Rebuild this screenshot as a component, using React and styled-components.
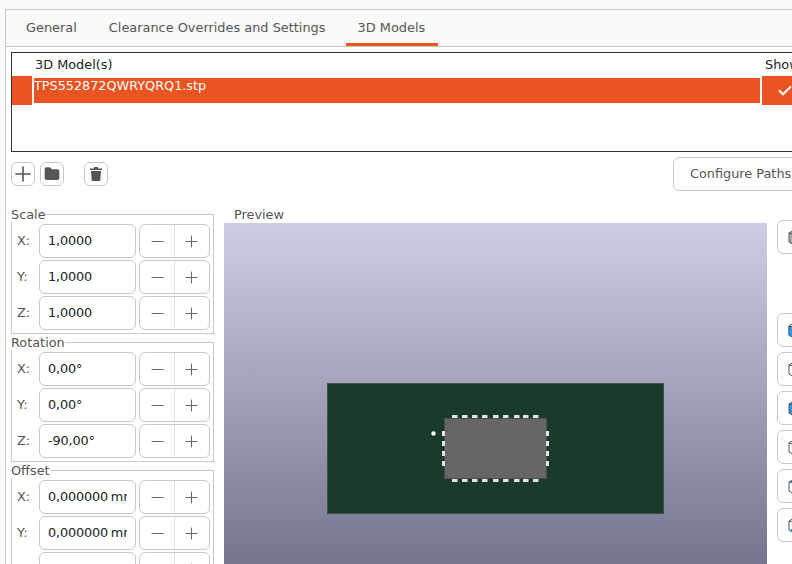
import React from 'react'
import styled, { createGlobalStyle } from 'styled-components'
import { Plus, Minus, Check, Folder } from 'lucide-react'

const Global = createGlobalStyle`
html, body { margin: 0; padding: 0; background: #fafafa; }
body { font-family: "DejaVu Sans", sans-serif; font-size: 12.85px; color: #2e3436; }
`

const Page = styled.div`
  width: 792px;
  height: 564px;
  overflow: hidden;
  padding: 9px 0 0 5px;
  box-sizing: border-box;
`
const Panel = styled.div`
  width: 900px;
  height: 600px;
  background: #fff;
  border-top: 1px solid #cdc7c2;
  border-left: 1px solid #cdc7c2;
  box-sizing: border-box;
`
const TabBar = styled.div`
  display: flex;
  height: 37px;
  box-sizing: border-box;
  padding-left: 8px;
  gap: 8px;
  background: #fafafa;
  border-bottom: 1px solid #cdc7c2;
  font-size: 12.9px;
`
const Tab = styled.div`
  padding: 0 ${p => (p.$active ? '13px' : '12px')} 0 12px;
  line-height: 35px;
  height: 36px;
  box-sizing: border-box;
  color: #555;
  border-bottom: 3px solid ${p => (p.$active ? '#e95420' : 'transparent')};
`
const Body = styled.div`
  padding: 5px 0 0 5px;
`
const Table = styled.div`
  width: 880px;
  height: 100px;
  box-sizing: border-box;
  border: 1px solid #333;
  background: #fff;
  color: #222;
`
const HeadRow = styled.div`
  display: grid;
  grid-template-columns: 23px 730px 1fr;
  height: 23px;
  line-height: 23px;
`
const DataRow = styled.div`
  display: grid;
  grid-template-columns: 20px 726px 1fr;
  column-gap: 2px;
  align-items: center;
  height: 29px;
`
const EndCell = styled.div`
  height: 29px;
  background: #e95420;
`
const NameCell = styled.div`
  height: 25px;
  background: #e95420;
  color: #fff;
  font-size: 12.8px;
  line-height: 16px;
`
const CheckCell = styled(EndCell)`
  display: flex;
  align-items: center;
  padding-left: 15px;
  color: #fff;
`
const Toolbar = styled.div`
  display: flex;
  align-items: center;
  height: 34px;
  margin-top: 5px;
  width: 880px;
`
const IconBtn = styled.div`
  width: 24px;
  height: 24px;
  box-sizing: border-box;
  border: 1px solid #cdc7c2;
  border-radius: 6px;
  background: #fff;
  color: #555;
  display: flex;
  align-items: center;
  justify-content: center;
  margin-left: ${p => p.$gap || 0}px;
  & > svg { flex: none; }
`
const PathsBtn = styled.div`
  margin-left: 565px;
  width: 130px;
  height: 34px;
  box-sizing: border-box;
  border: 1px solid #cdc7c2;
  border-radius: 6px;
  line-height: 32px;
  padding-left: 16px;
  color: #555;
  background: #fff;
  white-space: nowrap;
`
const Columns = styled.div`
  display: grid;
  grid-template-columns: 203px 543px 60px;
  column-gap: 10px;
  margin-top: 16px;
`
const Left = styled.div`
  display: flex;
  flex-direction: column;
  gap: 1px;
`
const Group = styled.fieldset`
  margin: 0;
  padding: 2px 3px 1px 0;
  border: 1px solid #cdc7c2;
  min-width: 0;
`
const Legend = styled.legend`
  padding: 0;
  margin: 0 0 0 -1px;
  line-height: 15px;
  color: #555;
`
const Field = styled.div`
  display: grid;
  grid-template-columns: 24px 97px 71px;
  column-gap: 3px;
  height: 34px;
  margin-bottom: 2px;
`
const Axis = styled.span`
  line-height: 34px;
  padding-left: 5px;
  color: #555;
`
const Input = styled.div`
  border: 1px solid #cdc7c2;
  border-radius: 6px;
  background: #fff;
  color: #222;
  line-height: 32px;
  padding: 0 8px;
  white-space: nowrap;
  box-sizing: border-box;
  height: 34px;
  letter-spacing: -0.17px;
  word-spacing: -1px;
  & > span { display: block; overflow: hidden; }
`
const Stepper = styled.div`
  display: grid;
  grid-template-columns: 34px 1fr;
  border: 1px solid #cdc7c2;
  border-radius: 6px;
  background: #fff;
  color: #666;
  box-sizing: border-box;
  height: 34px;
  & > div { display: flex; align-items: center; justify-content: center; }
  & > div + div { border-left: 1px solid #e6e3e0; padding-right: 2px; }
`
const PreviewLabel = styled.div`
  height: 16px;
  line-height: 15px;
  padding-left: 10px;
  color: #555;
`
const Viewer = styled.div`
  height: 400px;
  padding: 160px 0 0 103px;
  box-sizing: border-box;
  background: linear-gradient(180deg, #cdcde5 0, #75758f 341px);
  line-height: 0;
`
const Right = styled.div`
  display: flex;
  flex-direction: column;
  margin-top: 13px;
`
const ViewBtn = styled.div`
  width: 50px;
  height: 34px;
  box-sizing: border-box;
  border: 1px solid #cdc7c2;
  border-radius: 6px;
  background: #fff;
  flex: none;
  margin-bottom: 5px;
  padding: 8px 0 0 10px;
  line-height: 0;
  &:first-child { margin-bottom: 59px; }
`

// cube icon, face says which side is blue
function Cube({ face }) {
  const blue = '#2f97e0'
  const base = face === 'solid' ? '#a8a8a8' : '#fff'
  return (
    <svg width="18" height="18" viewBox="0 0 18 18">
      <path d="M1 4 L5 1.5 L13 1.5 L13 12 L5 15.5 L1 13 Z" fill={face === 'all' ? blue : base} stroke="#555" />
      {face === 'left' && <path d="M1 4 L5 5 L5 15.5 L1 13 Z" fill={blue} stroke="#1d6fa8" />}
      {face === 'top' && <path d="M1 4 L5 1.5 L13 1.5 L5 5 Z" fill={blue} />}
      {face === 'bottom' && <path d="M1 13 L5 15.5 L13 15.5 L5 12 Z" fill={blue} />}
      <path d="M1 4 L5 5 L5 15.5" fill="none" stroke="#555" />
    </svg>
  )
}

function TrashIcon() {
  return (
    <svg width="14" height="16" viewBox="0 0 14 16" fill="currentColor">
      <path d="M1 2.5 H5 V1 H9 V2.5 H13 V4 H1 Z" />
      <path d="M2 5 H12 L11.2 15 H2.8 Z" />
    </svg>
  )
}

// board and chip seen from above
function Board() {
  const top = [452, 462, 472, 482, 493, 503, 514, 523, 533]
  const side = [431, 441, 451, 461]
  return (
    <svg width="337" height="131" viewBox="327 383 337 131" style={{ display: 'block' }}>
      <rect x="327.5" y="383.5" width="336" height="130" fill="#1a3a2b" stroke="#3a5647" />
      <rect x="444.5" y="418.5" width="102" height="60" fill="#666" stroke="#4d4d4d" />
      {top.map(x => (
        <g key={x} fill="#e4e4e4">
          <rect x={x} y="415" width="5.5" height="3" />
          <rect x={x} y="479" width="5.5" height="3" />
        </g>
      ))}
      {side.map(y => (
        <g key={y} fill="#e4e4e4">
          <rect x="442" y={y} width="3" height="5" />
          <rect x="546" y={y} width="3" height="5" />
        </g>
      ))}
      <circle cx="433.5" cy="433.5" r="2.2" fill="#fff" />
    </svg>
  )
}

function Row({ axis, value }) {
  return (
    <Field>
      <Axis>{axis}:</Axis>
      <Input><span>{value}</span></Input>
      <Stepper>
        <div><Minus size={19} strokeWidth={1} absoluteStrokeWidth /></div>
        <div><Plus size={19} strokeWidth={1} absoluteStrokeWidth /></div>
      </Stepper>
    </Field>
  )
}

const groups = [
  { title: 'Scale', rows: [['X', '1,0000'], ['Y', '1,0000'], ['Z', '1,0000']] },
  { title: 'Rotation', rows: [['X', '0,00°'], ['Y', '0,00°'], ['Z', '-90,00°']] },
  { title: 'Offset', rows: [['X', '0,000000 mm'], ['Y', '0,000000 mm'], ['Z', '0,000000 mm']] },
]

export default function App() {
  return (
    <Page>
      <Global />
      <Panel>
        <TabBar>
          <Tab>General</Tab>
          <Tab>Clearance Overrides and Settings</Tab>
          <Tab $active>3D Models</Tab>
        </TabBar>
        <Body>
          <Table>
            <HeadRow>
              <span />
              <span>3D Model(s)</span>
              <span>Show</span>
            </HeadRow>
            <DataRow>
              <EndCell />
              <NameCell>TPS552872QWRYQRQ1.stp</NameCell>
              <CheckCell><Check size={16} strokeWidth={2.2} absoluteStrokeWidth /></CheckCell>
            </DataRow>
          </Table>
          <Toolbar>
            <IconBtn><Plus size={24} strokeWidth={1.6} absoluteStrokeWidth /></IconBtn>
            <IconBtn $gap={5}><Folder size={16} fill="currentColor" /></IconBtn>
            <IconBtn $gap={20}><TrashIcon /></IconBtn>
            <PathsBtn>Configure Paths</PathsBtn>
          </Toolbar>
          <Columns>
            <Left>
              {groups.map(g => (
                <Group key={g.title}>
                  <Legend>{g.title}</Legend>
                  {g.rows.map(r => <Row key={r[0]} axis={r[0]} value={r[1]} />)}
                </Group>
              ))}
            </Left>
            <div>
              <PreviewLabel>Preview</PreviewLabel>
              <Viewer><Board /></Viewer>
            </div>
            <Right>
              <ViewBtn><Cube face="solid" /></ViewBtn>
              <ViewBtn><Cube face="left" /></ViewBtn>
              <ViewBtn><Cube face="none" /></ViewBtn>
              <ViewBtn><Cube face="all" /></ViewBtn>
              <ViewBtn><Cube face="none" /></ViewBtn>
              <ViewBtn><Cube face="top" /></ViewBtn>
              <ViewBtn><Cube face="bottom" /></ViewBtn>
            </Right>
          </Columns>
        </Body>
      </Panel>
    </Page>
  )
}
